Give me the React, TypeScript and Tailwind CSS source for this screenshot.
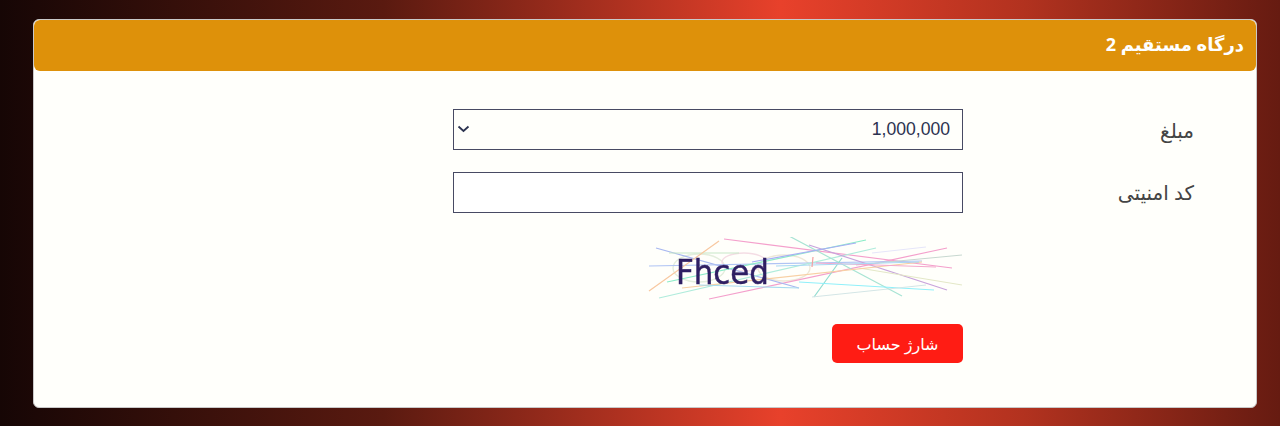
import React from "react";

const lines: [number, number, number, number, string][] = [
  [725, 239, 953, 268, "#f4a0cc"],
  [710, 299, 948, 248, "#f4a0cc"],
  [657, 248, 800, 288, "#a8b8f0"],
  [650, 266, 923, 261, "#b0c4f4"],
  [670, 253, 740, 253, "#c8e8c8"],
  [650, 291, 720, 241, "#f8c8a0"],
  [660, 298, 877, 248, "#b0ecdc"],
  [790, 236, 903, 296, "#a8e4d4"],
  [815, 297, 843, 258, "#90dcd0"],
  [668, 282, 867, 240, "#8cecc8"],
  [810, 245, 948, 290, "#c8a4dc"],
  [800, 282, 935, 290, "#90f0fa"],
  [813, 297, 927, 285, "#d4e6e6"],
  [753, 262, 857, 243, "#a8b0f4"],
  [857, 265, 963, 255, "#c8d8d0"],
  [860, 268, 963, 285, "#e4e8c8"],
  [873, 253, 927, 247, "#e6e6fa"],
  [683, 288, 923, 262, "#f8d0a4"],
  [817, 263, 937, 267, "#f4a8cc"],
  [777, 266, 920, 262, "#a8d8f4"],
  [814, 257, 813, 267, "#f4a0a0"],
  [700, 285, 800, 288, "#a8dcf0"],
];

export default function App() {
  return (
    <div className="h-[426px] overflow-hidden bg-[linear-gradient(90deg,#160605_0%,#5a1a10_30%,#e8412b_61%,#b2321f_80%,#661b11_100%)] pl-[33px] pr-[23px] pt-[19px] font-['Noto_Sans','DejaVu_Sans',sans-serif]" dir="rtl">
      <div className="h-[389px] overflow-hidden rounded-[6px] border border-[#c9c9c9] bg-[#fffffb]">
        <div className="flex h-[51px] items-center rounded-[6px] bg-[#de910a] px-[12px] pb-[2px] text-[18px] font-bold text-white">
          درگاه مستقیم 2
        </div>
        <div className="flex flex-col pr-[62px] pt-[38px]">
          <div className="flex h-[41px] items-center">
            <label className="w-[231px] pt-[3px] text-[20px] text-[#444444]">مبلغ</label>
            <div className="relative w-[510px]">
              <select className="h-[41px] w-full appearance-none rounded-none border border-[#474a63] bg-transparent px-3 font-['Liberation_Sans',sans-serif] text-[17.6px] text-[#2c3350]" defaultValue="1000000">
                <option value="1000000">1,000,000</option>
              </select>
              <svg className="pointer-events-none absolute left-[4px] top-[15px]" width="13" height="10" viewBox="0 0 13 10" fill="none">
                <path d="M1.5 2.5 L6.5 7 L11.5 2.5" stroke="#2c3350" strokeWidth="1.8" />
              </svg>
            </div>
          </div>
          <div className="mt-[22px] flex h-[41px] items-center">
            <label className="w-[231px] pt-[1px] text-[20px] text-[#444444]">کد امنیتی</label>
            <input className="h-[41px] w-[510px] rounded-none border border-[#474a63] bg-white" type="text" />
          </div>
          <div className="mr-[231px] mt-[24px] flex justify-start">
            <svg width="316" height="64" viewBox="648 237 316 64" className="block blur-[0.4px]">
              <ellipse cx="700" cy="268" rx="26" ry="14" fill="none" stroke="#e4eedd" strokeWidth="1.4" />
              <ellipse cx="745" cy="262" rx="22" ry="9" fill="none" stroke="#f4dde4" strokeWidth="1.4" />
              <ellipse cx="785" cy="268" rx="26" ry="13" fill="none" stroke="#eee8d8" strokeWidth="1.4" />
              {lines.map(([x1, y1, x2, y2, c], i) => (
                <line key={i} x1={x1} y1={y1} x2={x2} y2={y2} stroke={c} strokeWidth="1.2" />
              ))}
              <text x="677" y="284" fontFamily="'DejaVu Sans', sans-serif" fontSize="33" fill="#2f1f63" stroke="#2f1f63" strokeWidth="0.5" textLength="93" lengthAdjust="spacingAndGlyphs" direction="ltr">
                Fhced
              </text>
            </svg>
          </div>
          <div className="mr-[231px] mt-[23px]">
            <button className="h-[39px] w-[131px] rounded-[5px] bg-[#ff1c14] text-[16px] text-white" type="button">
              شارژ حساب
            </button>
          </div>
        </div>
      </div>
    </div>
  );
}
